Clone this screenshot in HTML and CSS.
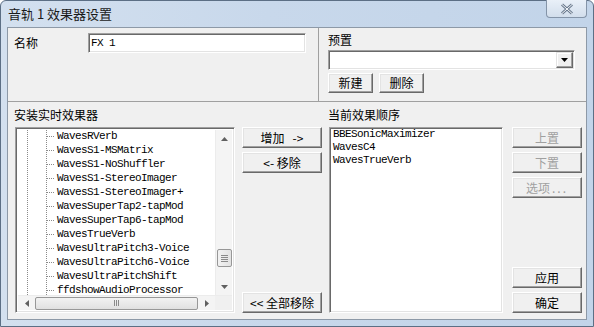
FILE: index.html
```html
<!DOCTYPE html>
<html>
<head>
<meta charset="utf-8">
<link rel="stylesheet" href="styles.css">
</head>
<body>
<div class="window">
  <div class="titlebar">
    <span class="title">音轨 1 效果器设置</span>
    <div class="close">
      <svg width="16" height="12" viewBox="0 0 16 12">
        <path d="M3 1.5 L13 10.5 M13 1.5 L3 10.5" stroke="#6a7a8e" stroke-width="3" fill="none"/>
        <path d="M3 1.5 L13 10.5 M13 1.5 L3 10.5" stroke="#f4f7fb" stroke-width="1" fill="none"/>
      </svg>
    </div>
  </div>
  <div class="client">
    <div class="top">
      <div class="name-panel">
        <span class="name-label">名称</span>
        <div class="input mono">FX 1</div>
      </div>
      <div class="preset-panel">
        <div class="label">预置</div>
        <div class="combo">
          <div class="combo-btn">
            <svg width="7" height="4" viewBox="0 0 7 4"><path d="M0 0 H7 L3.5 4 Z" fill="#000"/></svg>
          </div>
        </div>
        <div class="btn-row">
          <button class="btn small">新建</button>
          <button class="btn small">删除</button>
        </div>
      </div>
    </div>
    <div class="bottom">
      <div class="label">安装实时效果器</div>
      <div></div>
      <div class="label">当前效果顺序</div>
      <div></div>

      <div class="tree sunken">
        <div class="tree-main">
          <div class="tree-rows mono">
            <div class="row">WavesRVerb</div>
            <div class="row">WavesS1-MSMatrix</div>
            <div class="row">WavesS1-NoShuffler</div>
            <div class="row">WavesS1-StereoImager</div>
            <div class="row">WavesS1-StereoImager+</div>
            <div class="row">WavesSuperTap2-tapMod</div>
            <div class="row">WavesSuperTap6-tapMod</div>
            <div class="row">WavesTrueVerb</div>
            <div class="row">WavesUltraPitch3-Voice</div>
            <div class="row">WavesUltraPitch6-Voice</div>
            <div class="row">WavesUltraPitchShift</div>
            <div class="row">ffdshowAudioProcessor</div>
          </div>
          <div class="vscroll">
            <div class="arrow-v"><svg width="7" height="4" viewBox="0 0 7 4"><path d="M0 4 H7 L3.5 0 Z" fill="#606060"/></svg></div>
            <div class="vtrack">
              <div class="vthumb"><span></span><span></span><span></span><span></span></div>
            </div>
            <div class="arrow-v"><svg width="7" height="4" viewBox="0 0 7 4"><path d="M0 0 H7 L3.5 4 Z" fill="#606060"/></svg></div>
          </div>
        </div>
        <div class="hscroll">
          <div class="arrow-h"><svg width="4" height="7" viewBox="0 0 4 7"><path d="M4 0 V7 L0 3.5 Z" fill="#606060"/></svg></div>
          <div class="htrack">
            <div class="hthumb"><span></span><span></span><span></span></div>
          </div>
          <div class="arrow-h"><svg width="4" height="7" viewBox="0 0 4 7"><path d="M0 0 V7 L4 3.5 Z" fill="#606060"/></svg></div>
          <div class="corner"></div>
        </div>
      </div>

      <div class="mid-col">
        <button class="btn wide">增加&nbsp;&nbsp;&nbsp;-&gt;</button>
        <button class="btn wide">&lt;- 移除</button>
        <button class="btn wide push">&lt;&lt; 全部移除</button>
      </div>

      <div class="list sunken mono">
        <div class="lrow">BBESonicMaximizer</div>
        <div class="lrow">WavesC4</div>
        <div class="lrow">WavesTrueVerb</div>
      </div>

      <div class="right-col">
        <button class="btn side disabled">上置</button>
        <button class="btn side disabled">下置</button>
        <button class="btn side disabled">选项<span class="dots">...</span></button>
        <button class="btn side push">应用</button>
        <button class="btn side">确定</button>
      </div>
    </div>
  </div>
</div>
</body>
</html>
```

FILE: styles.css
```css
* { box-sizing: border-box; }
html, body { margin: 0; padding: 0; }
body {
  width: 594px;
  height: 327px;
  overflow: hidden;
  background: #ffffff;
  font-family: "Noto Sans CJK SC", sans-serif;
  font-size: 12px;
  color: #000;
}
.mono {
  font-family: "Liberation Mono", monospace;
  font-size: 11px;
  letter-spacing: -0.6px;
}
.window {
  width: 594px;
  height: 327px;
  border: 1px solid #5c6f85;
  border-radius: 6px 6px 0 0;
  background: linear-gradient(to right, #d3e0ef 0%, #c8d8eb 45%, #c2d4e9 100%);
  padding: 0 6px 6px 6px;
  display: flex;
  flex-direction: column;
}
.titlebar {
  height: 26px;
  display: flex;
  justify-content: space-between;
  align-items: flex-start;
}
.title {
  padding-left: 1px;
  line-height: 26px;
  font-size: 13px;
  color: #1a1a1a;
}
.close {
  width: 41px;
  height: 18px;
  margin-top: -1px;
  border: 1px solid #8494a8;
  border-top: none;
  border-radius: 0 0 4px 4px;
  background: linear-gradient(#e9f0f8, #d2deec);
  display: flex;
  align-items: center;
  justify-content: center;
}
.client {
  flex: 1;
  border: 1px solid #8d99a7;
  background: #f0f0f0;
  display: flex;
  flex-direction: column;
}
.top {
  height: 74px;
  border-bottom: 1px solid #a0a0a0;
  display: flex;
}
.name-panel {
  width: 311px;
  border-right: 1px solid #a0a0a0;
  padding: 5px 0 0 6px;
  display: flex;
  align-items: flex-start;
}
.name-label {
  width: 74px;
  line-height: 20px;
}
.input {
  width: 218px;
  height: 20px;
  line-height: 16px;
  background: #fff;
  border: 1px solid;
  border-color: #a0a0a0 #ffffff #ffffff #a0a0a0;
  box-shadow: inset 1px 1px #696969, inset -1px -1px #e3e3e3;
  padding-top: 1px;
  padding-left: 2px;
}
.sunken {
  background: #fff;
  border: 1px solid;
  border-color: #a0a0a0 #ffffff #ffffff #a0a0a0;
  box-shadow: inset 1px 1px #696969, inset -1px -1px #e3e3e3;
}
.preset-panel {
  flex: 1;
  padding: 5px 0 0 9px;
}
.label {
  line-height: 14px;
  height: 14px;
}
.combo {
  margin-top: 3px;
  width: 247px;
  height: 20px;
  background: #fff;
  border: 1px solid;
  border-color: #a0a0a0 #ffffff #ffffff #a0a0a0;
  box-shadow: inset 1px 1px #696969, inset -1px -1px #e3e3e3;
  display: flex;
  justify-content: flex-end;
  padding: 1px;
}
.combo-btn {
  width: 17px;
  height: 16px;
  background: #f0f0f0;
  border: 1px solid;
  border-color: #e3e3e3 #696969 #696969 #e3e3e3;
  box-shadow: inset -1px -1px #a0a0a0, inset 1px 1px #ffffff;
  display: flex;
  align-items: center;
  justify-content: center;
}
.btn-row {
  margin-top: 3px;
  display: flex;
  gap: 6px;
}
.btn {
  height: 21px;
  padding: 0;
  margin: 0;
  background: #f0f0f0;
  border: 1px solid;
  border-color: #ffffff #696969 #696969 #ffffff;
  box-shadow: inset -1px -1px #a0a0a0, inset 1px 1px #e3e3e3;
  font-family: "Noto Sans CJK SC", sans-serif;
  font-size: 12px;
  line-height: 16px;
  color: #000;
  display: flex;
  align-items: center;
  justify-content: center;
  white-space: pre;
}
.btn.small { width: 45px; height: 20px; }
.btn.wide { width: 80px; }
.btn.side { width: 70px; }
.btn.disabled { color: #a0a0a0; }
.dots { letter-spacing: 2px; margin-left: 2px; }
.bottom {
  flex: 1;
  display: grid;
  grid-template-columns: 228px 86px 184px 70px;
  grid-template-rows: 14px 186px;
  row-gap: 5px;
  padding: 6px 0 0 6px;
}
.tree {
  width: 220px;
  height: 186px;
  margin-left: 1px;
  padding: 2px;
  display: flex;
  flex-direction: column;
}
.tree-main {
  flex: 1;
  display: flex;
  min-height: 0;
}
.tree-rows {
  flex: 1;
  overflow: hidden;
  background-image:
    linear-gradient(to bottom, #8a8a8a 1px, transparent 1px),
    linear-gradient(to bottom, #8a8a8a 1px, transparent 1px);
  background-size: 1px 2px, 1px 2px;
  background-position: 9px 0, 28px 0;
  background-repeat: repeat-y, repeat-y;
}
.row {
  height: 14px;
  line-height: 14px;
  padding-left: 29px;
  white-space: nowrap;
}
.row:first-child { margin-top: -1px; }
.row::before {
  content: "";
  display: inline-block;
  width: 8px;
  height: 1px;
  margin-right: 2px;
  vertical-align: middle;
  background-image: linear-gradient(to right, #8a8a8a 1px, transparent 1px);
  background-size: 2px 1px;
  background-repeat: repeat-x;
}
.vscroll {
  width: 17px;
  display: flex;
  flex-direction: column;
  background: #f4f4f4;
  border-left: 1px solid #ececec;
}
.arrow-v {
  height: 17px;
  display: flex;
  align-items: center;
  justify-content: center;
}
.vtrack {
  flex: 1;
  padding-top: 102px;
  display: flex;
  justify-content: center;
}
.vthumb {
  width: 15px;
  height: 18px;
  border: 1px solid #979797;
  border-radius: 2px;
  background: linear-gradient(to right, #f2f2f2, #e2e2e2);
  display: flex;
  flex-direction: column;
  align-items: center;
  justify-content: center;
  gap: 1px;
}
.vthumb span {
  width: 7px;
  height: 1px;
  background: #8a8a8a;
}
.hscroll {
  height: 15px;
  display: flex;
  background: #f4f4f4;
  border-top: 1px solid #ececec;
}
.arrow-h {
  width: 17px;
  display: flex;
  align-items: center;
  justify-content: center;
}
.htrack {
  flex: 1;
  display: flex;
  align-items: center;
}
.hthumb {
  width: 163px;
  height: 13px;
  border: 1px solid #979797;
  border-radius: 2px;
  background: linear-gradient(#f2f2f2, #e0e0e0);
  display: flex;
  align-items: center;
  justify-content: center;
  gap: 1px;
}
.hthumb span {
  width: 1px;
  height: 6px;
  background: #8a8a8a;
}
.corner {
  width: 17px;
  background: #f0f0f0;
}
.mid-col {
  display: flex;
  flex-direction: column;
  gap: 4px;
}
.right-col {
  display: flex;
  flex-direction: column;
  gap: 4px;
}
.push { margin-top: auto; }
.list {
  width: 174px;
  height: 186px;
  margin-left: 1px;
  padding: 0 2px 2px 3px;
}
.lrow {
  height: 13px;
  line-height: 13px;
  white-space: nowrap;
}
```
